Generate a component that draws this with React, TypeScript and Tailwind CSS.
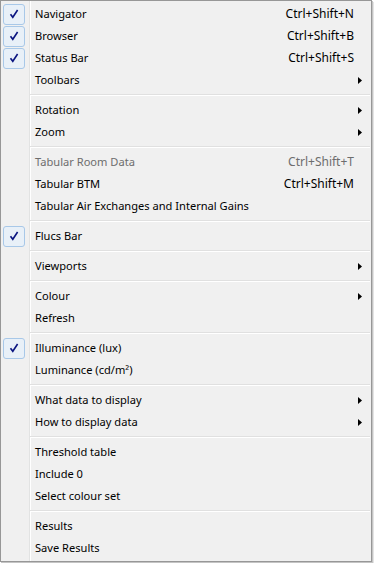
import React from 'react';

type Item =
  | { sep: true }
  | {
      sep?: false;
      label: string;
      shortcut?: string;
      checked?: boolean;
      disabled?: boolean;
      submenu?: boolean;
    };

const items: Item[] = [
  { label: 'Navigator', shortcut: 'Ctrl+Shift+N', checked: true },
  { label: 'Browser', shortcut: 'Ctrl+Shift+B', checked: true },
  { label: 'Status Bar', shortcut: 'Ctrl+Shift+S', checked: true },
  { label: 'Toolbars', submenu: true },
  { sep: true },
  { label: 'Rotation', submenu: true },
  { label: 'Zoom', submenu: true },
  { sep: true },
  { label: 'Tabular Room Data', shortcut: 'Ctrl+Shift+T', disabled: true },
  { label: 'Tabular BTM', shortcut: 'Ctrl+Shift+M' },
  { label: 'Tabular Air Exchanges and Internal Gains' },
  { sep: true },
  { label: 'Flucs Bar', checked: true },
  { sep: true },
  { label: 'Viewports', submenu: true },
  { sep: true },
  { label: 'Colour', submenu: true },
  { label: 'Refresh' },
  { sep: true },
  { label: 'Illuminance (lux)', checked: true },
  { label: 'Luminance (cd/m²)' },
  { sep: true },
  { label: 'What data to display', submenu: true },
  { label: 'How to display data', submenu: true },
  { sep: true },
  { label: 'Threshold table' },
  { label: 'Include 0' },
  { label: 'Select colour set' },
  { sep: true },
  { label: 'Results' },
  { label: 'Save Results' },
];

function CheckBox() {
  return (
    <div className="flex h-[21px] w-[22px] items-center justify-center rounded-[3px] border border-[#a8c8e8] bg-[#e8f0f8]">
      <svg width="10" height="10" viewBox="0 0 10 10">
        <path d="M1.5 5.2 L3.8 8.3 L8.6 1" fill="none" stroke="#0a1480" strokeWidth="1.6" />
      </svg>
    </div>
  );
}

function Arrow() {
  return (
    <svg width="4" height="7" viewBox="0 0 4 7">
      <polygon points="0,0 4,3.5 0,7" fill="#000" />
    </svg>
  );
}

export default function App() {
  return (
    <div className="h-[563px] w-[374px] bg-white" style={{ fontFamily: '"Noto Sans", sans-serif' }}>
      <div className="w-[372px] border border-[#979797] bg-[linear-gradient(to_right,#f0f0f0_28px,#e2e3e3_28px,#e2e3e3_29px,#ffffff_29px,#ffffff_30px,#f0f0f0_30px)] py-[2px] shadow-[1px_1px_0_#c4c4c4,2px_2px_0_#e4e4e4]">
        {items.map((item, i) =>
          item.sep ? (
            <div key={i} className="ml-[29px] mr-[1px] h-[8px] pt-[3px]">
              <div className="border-t border-b border-t-[#e0e0e0] border-b-white" />
            </div>
          ) : (
            <div
              key={i}
              className={`flex h-[22px] items-center pl-[2px] ${item.disabled ? 'text-[#6d6d6d]' : 'text-black'}`}
            >
              <div className="flex w-[22px] justify-center">{item.checked && <CheckBox />}</div>
              <div className="ml-[10px] flex-1 whitespace-nowrap text-[11.1px]">{item.label}</div>
              {item.shortcut && <div className="whitespace-nowrap text-[12px]">{item.shortcut}</div>}
              <div className="flex w-[17px] pl-[4px]">{item.submenu && <Arrow />}</div>
            </div>
          )
        )}
      </div>
    </div>
  );
}
